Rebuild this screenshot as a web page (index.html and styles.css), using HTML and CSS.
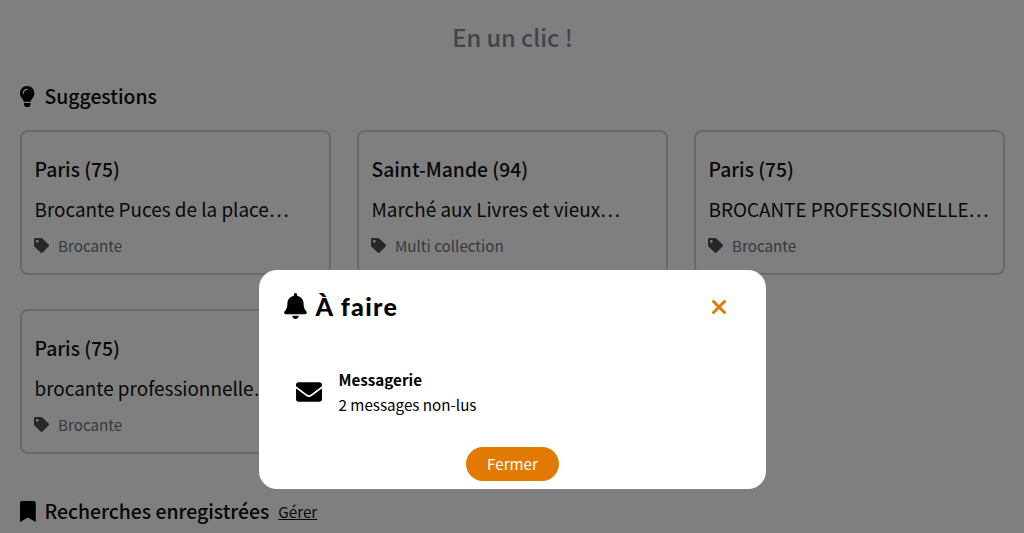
FILE: index.html
```html
<!DOCTYPE html>
<html lang="fr">
<head>
<meta charset="utf-8">
<title>En un clic !</title>
<link rel="stylesheet" href="styles.css">
</head>
<body>
<main class="page">
  <h1 class="page-title">En un clic !</h1>
  <h2 class="section-title">
    <svg class="section-icon" viewBox="0 0 352 512" preserveAspectRatio="xMinYMid"><path d="M96.06 454.35c.01 6.29 1.87 12.45 5.36 17.69l17.09 25.69a31.99 31.99 0 0 0 26.64 14.28h61.71a31.99 31.99 0 0 0 26.64-14.28l17.09-25.69a31.989 31.989 0 0 0 5.36-17.69l.04-38.35H96.01l.05 38.35zM0 176c0 44.37 16.45 84.85 43.56 115.78 16.52 18.85 42.36 58.23 52.21 91.45.04.26.07.52.11.78h160.24c.04-.26.07-.51.11-.78 9.85-33.22 35.69-72.6 52.21-91.45C335.55 260.85 352 220.37 352 176 352 78.61 272.91-.3 175.45 0 73.44.31 0 82.97 0 176zm176-80c-44.11 0-80 35.89-80 80 0 8.84-7.16 16-16 16s-16-7.16-16-16c0-61.76 50.24-112 112-112 8.84 0 16 7.16 16 16s-7.16 16-16 16z"/></svg>
    Suggestions
  </h2>
  <section class="cards">
    <article class="card">
      <h3 class="card-city">Paris (75)</h3>
      <p class="card-name">Brocante Puces de la place…</p>
      <p class="card-tag"><svg class="tag-icon" viewBox="0 0 512 512"><path d="M0 252.118V48C0 21.49 21.49 0 48 0h204.118a48 48 0 0 1 33.941 14.059l211.882 211.882c18.745 18.745 18.745 49.137 0 67.882L293.823 497.941c-18.745 18.745-49.137 18.745-67.882 0L14.059 286.059A48 48 0 0 1 0 252.118zM112 64c-26.51 0-48 21.49-48 48s21.49 48 48 48 48-21.49 48-48-21.49-48-48-48z"/></svg>Brocante</p>
    </article>
    <article class="card">
      <h3 class="card-city">Saint-Mande (94)</h3>
      <p class="card-name">Marché aux Livres et vieux…</p>
      <p class="card-tag"><svg class="tag-icon" viewBox="0 0 512 512"><path d="M0 252.118V48C0 21.49 21.49 0 48 0h204.118a48 48 0 0 1 33.941 14.059l211.882 211.882c18.745 18.745 18.745 49.137 0 67.882L293.823 497.941c-18.745 18.745-49.137 18.745-67.882 0L14.059 286.059A48 48 0 0 1 0 252.118zM112 64c-26.51 0-48 21.49-48 48s21.49 48 48 48 48-21.49 48-48-21.49-48-48-48z"/></svg>Multi collection</p>
    </article>
    <article class="card">
      <h3 class="card-city">Paris (75)</h3>
      <p class="card-name">BROCANTE PROFESSIONELLE…</p>
      <p class="card-tag"><svg class="tag-icon" viewBox="0 0 512 512"><path d="M0 252.118V48C0 21.49 21.49 0 48 0h204.118a48 48 0 0 1 33.941 14.059l211.882 211.882c18.745 18.745 18.745 49.137 0 67.882L293.823 497.941c-18.745 18.745-49.137 18.745-67.882 0L14.059 286.059A48 48 0 0 1 0 252.118zM112 64c-26.51 0-48 21.49-48 48s21.49 48 48 48 48-21.49 48-48-21.49-48-48-48z"/></svg>Brocante</p>
    </article>
    <article class="card">
      <h3 class="card-city">Paris (75)</h3>
      <p class="card-name">brocante professionnelle…</p>
      <p class="card-tag"><svg class="tag-icon" viewBox="0 0 512 512"><path d="M0 252.118V48C0 21.49 21.49 0 48 0h204.118a48 48 0 0 1 33.941 14.059l211.882 211.882c18.745 18.745 18.745 49.137 0 67.882L293.823 497.941c-18.745 18.745-49.137 18.745-67.882 0L14.059 286.059A48 48 0 0 1 0 252.118zM112 64c-26.51 0-48 21.49-48 48s21.49 48 48 48 48-21.49 48-48-21.49-48-48-48z"/></svg>Brocante</p>
    </article>
  </section>
  <h2 class="section-title saved">
    <svg class="section-icon" viewBox="0 0 384 512" preserveAspectRatio="xMinYMid"><path d="M0 512V48C0 21.49 21.49 0 48 0h288c26.51 0 48 21.49 48 48v464L192 400 0 512z"/></svg>
    Recherches enregistrées <a class="manage" href="#">Gérer</a>
  </h2>
</main>
<div class="overlay">
  <div class="modal">
    <header class="modal-head">
      <h2 class="modal-title">
        <svg class="bell" viewBox="0 0 448 512"><path d="M224 512c35.32 0 63.97-28.65 63.97-64H160.03c0 35.35 28.65 64 63.97 64zm215.39-149.71c-19.32-20.76-55.47-51.99-55.47-154.29 0-77.7-54.48-139.9-127.94-155.16V32c0-17.67-14.32-32-31.98-32s-31.98 14.33-31.98 32v20.84C118.56 68.1 64.08 130.3 64.08 208c0 102.3-36.15 133.53-55.47 154.29-6 6.45-8.66 14.16-8.61 21.71.11 16.4 12.98 32 32.1 32h383.8c19.12 0 32-15.6 32.1-32 .05-7.55-2.61-15.27-8.61-21.71z"/></svg>
        À faire
      </h2>
      <svg class="close" viewBox="0 0 14 14"><path d="M1.5 1.5l11 11M12.5 1.5l-11 11"/></svg>
    </header>
    <div class="todo">
      <svg class="envelope" viewBox="0 0 512 512"><path d="M502.3 190.8c3.9-3.1 9.7-.2 9.7 4.7V400c0 26.5-21.5 48-48 48H48c-26.5 0-48-21.5-48-48V195.6c0-5 5.7-7.8 9.7-4.7 22.4 17.4 52.1 39.5 154.1 113.6 21.1 15.4 56.7 47.8 92.2 47.6 35.7.3 72-32.8 92.3-47.6 102-74.1 131.6-96.3 154-113.7zM256 320c23.2.4 56.6-29.2 73.4-41.4 132.7-96.3 142.8-104.7 173.4-128.7 5.8-4.5 9.2-11.5 9.2-18.9v-19c0-26.5-21.5-48-48-48H48C21.5 64 0 85.5 0 112v19c0 7.4 3.4 14.3 9.2 18.9 30.6 23.9 40.7 32.4 173.4 128.7 16.8 12.2 50.2 41.8 73.4 41.4z"/></svg>
      <div class="todo-text">
        <strong class="todo-title">Messagerie</strong>
        <span class="todo-sub">2 messages non-lus</span>
      </div>
    </div>
    <footer class="modal-foot"><button class="btn">Fermer</button></footer>
  </div>
</div>
</body>
</html>
```
FILE: styles.css
```css
* { box-sizing: border-box; }
html, body { height: 100%; }
body {
  margin: 0;
  overflow: hidden;
  background: #fff;
  color: #111;
  font-family: "Noto Sans CJK JP", "Noto Sans", sans-serif;
}
.page { padding: 20px 19px 0 20px; }
.page-title {
  margin: 0 0 27px;
  text-align: center;
  font-size: 23.6px;
  line-height: 34px;
  font-weight: 500;
  color: #7f8a96;
}
.section-title {
  display: flex;
  align-items: center;
  margin: 0 0 19px;
  font-size: 19.4px;
  line-height: 30px;
  font-weight: 500;
  color: #0a0a0a;
}
.section-icon { flex: none; width: 16px; height: 21px; margin-right: 8.5px; fill: #000; }
.saved { margin: 42px 0 0; }
.manage {
  margin-left: 9px;
  font-size: 15.2px;
  font-weight: 400;
  color: #111;
}
.cards {
  display: grid;
  grid-template-columns: repeat(3, 311px);
  column-gap: 26px;
  row-gap: 34px;
}
.card {
  height: 145px;
  padding: 22px 12.5px 0;
  border: 2px solid #cfd3d7;
  border-radius: 8px;
}
.card-city {
  margin: 0;
  font-size: 19.3px;
  line-height: 30px;
  font-weight: 500;
}
.card-name {
  margin: 10px 0 0;
  font-size: 18.9px;
  line-height: 30px;
  white-space: nowrap;
}
.card-tag {
  display: flex;
  align-items: center;
  margin: 9px 0 0 -.5px;
  font-size: 15.2px;
  line-height: 24px;
  color: #6c757d;
}
.tag-icon { flex: none; width: 15px; height: 15px; margin-right: 9px; fill: #495057; }
.overlay {
  position: fixed;
  inset: 0;
  display: flex;
  justify-content: center;
  align-items: flex-start;
  padding-top: 270px;
  background: rgba(0, 0, 0, .5);
}
.modal {
  width: 507px;
  height: 219px;
  padding: 20px 25px 8px;
  border-radius: 18px;
  background: #fff;
  color: #000;
}
.modal-head { display: flex; justify-content: space-between; align-items: center; }
.modal-title {
  display: flex;
  align-items: center;
  margin: 0;
  font-family: "Lato", sans-serif;
  font-size: 25px;
  line-height: 32px;
  font-weight: 900;
  letter-spacing: 1.3px;
}
.bell { width: 23px; height: 26px; margin-right: 9px; fill: #000; }
.close { width: 14px; height: 14px; margin: 2px 15px 0 0; fill: none; stroke: #e27900; stroke-width: 3; stroke-linecap: round; }
.todo { display: flex; align-items: center; margin: 33px 0 0 12px; height: 74px; }
.envelope { flex: none; width: 26px; height: 26px; margin-right: 17px; fill: #000; }
.todo-text { display: flex; flex-direction: column; }
.todo-title { font-size: 15.2px; line-height: 25px; font-weight: 700; }
.todo-sub { font-size: 15.2px; line-height: 25px; }
.modal-foot { display: flex; justify-content: center; margin-top: 18px; }
.btn {
  width: 93px;
  height: 34px;
  padding: 0 0 2px 1px;
  border: 0;
  border-radius: 17px;
  background: #e27900;
  color: #fff;
  font: 400 15.2px/32px "Noto Sans CJK JP", sans-serif;
}
```
